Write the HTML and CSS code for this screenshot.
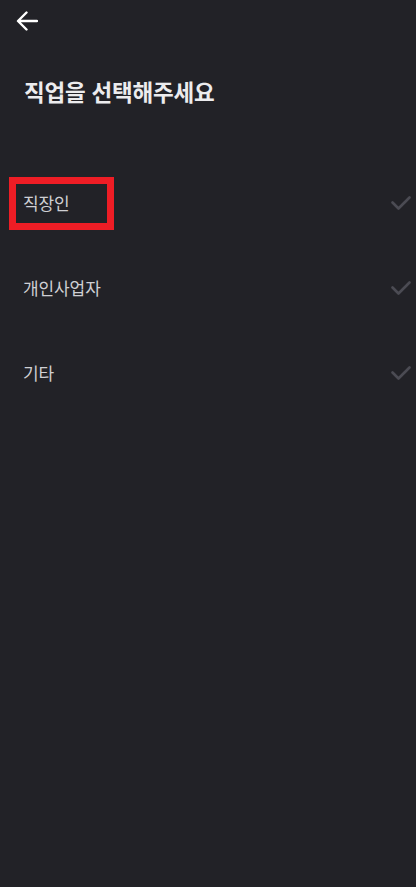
FILE: index.html
```html
<!DOCTYPE html>
<html lang="ko">
<head>
<meta charset="utf-8">
<link rel="stylesheet" href="styles.css">
</head>
<body>
<div class="screen">
  <header class="topbar">
    <button class="back" aria-label="뒤로">
      <svg width="22" height="20" viewBox="0 0 22 20"><path d="M21 10H2.5M10.5 1.5L2 10l8.5 8.5" fill="none" stroke="#fff" stroke-width="2.4" stroke-linecap="round" stroke-linejoin="round"/></svg>
    </button>
  </header>
  <h1 class="title">직업을 선택해주세요</h1>
  <ul class="options">
    <li class="option">
      <span class="label">직장인</span>
      <svg class="check" width="20" height="14" viewBox="0 0 20 14"><path d="M1.5 6.5l6 6L18.5 1.5" fill="none" stroke="#4b4b53" stroke-width="2.6" stroke-linecap="round" stroke-linejoin="round"/></svg>
      <span class="highlight"></span>
    </li>
    <li class="option">
      <span class="label">개인사업자</span>
      <svg class="check" width="20" height="14" viewBox="0 0 20 14"><path d="M1.5 6.5l6 6L18.5 1.5" fill="none" stroke="#4b4b53" stroke-width="2.6" stroke-linecap="round" stroke-linejoin="round"/></svg>
    </li>
    <li class="option">
      <span class="label">기타</span>
      <svg class="check" width="20" height="14" viewBox="0 0 20 14"><path d="M1.5 6.5l6 6L18.5 1.5" fill="none" stroke="#4b4b53" stroke-width="2.6" stroke-linecap="round" stroke-linejoin="round"/></svg>
    </li>
  </ul>
</div>
</body>
</html>
```
FILE: styles.css
```css
* { box-sizing: border-box; }
html, body {
  margin: 0;
  padding: 0;
  background: #222227;
}
body {
  font-family: "Noto Sans CJK KR", "Noto Sans", sans-serif;
  color: #e6e6e8;
}
.screen {
  width: 416px;
  height: 887px;
  background: #222227;
  overflow: hidden;
}
.topbar {
  height: 42px;
  display: flex;
  align-items: center;
  padding-left: 16px;
}
.back {
  background: none;
  border: 0;
  padding: 0;
  display: flex;
  cursor: pointer;
}
.title {
  margin: 33px 0 0;
  padding-left: 24px;
  font-size: 22.5px;
  line-height: 32px;
  font-weight: 700;
  letter-spacing: -0.2px;
  color: #ececee;
}
.options {
  list-style: none;
  margin: 53px 0 0;
  padding: 0;
}
.option {
  position: relative;
  height: 85px;
  display: flex;
  align-items: center;
  justify-content: space-between;
  padding: 0 5px 0 23px;
}
.label {
  font-size: 17px;
  line-height: 24px;
  color: #cfcfd3;
  letter-spacing: -0.1px;
}
.check { display: block; }
.highlight {
  position: absolute;
  left: 9px;
  top: 17px;
  width: 105px;
  height: 53px;
  border: 7.5px solid #ee1d25;
}
```
